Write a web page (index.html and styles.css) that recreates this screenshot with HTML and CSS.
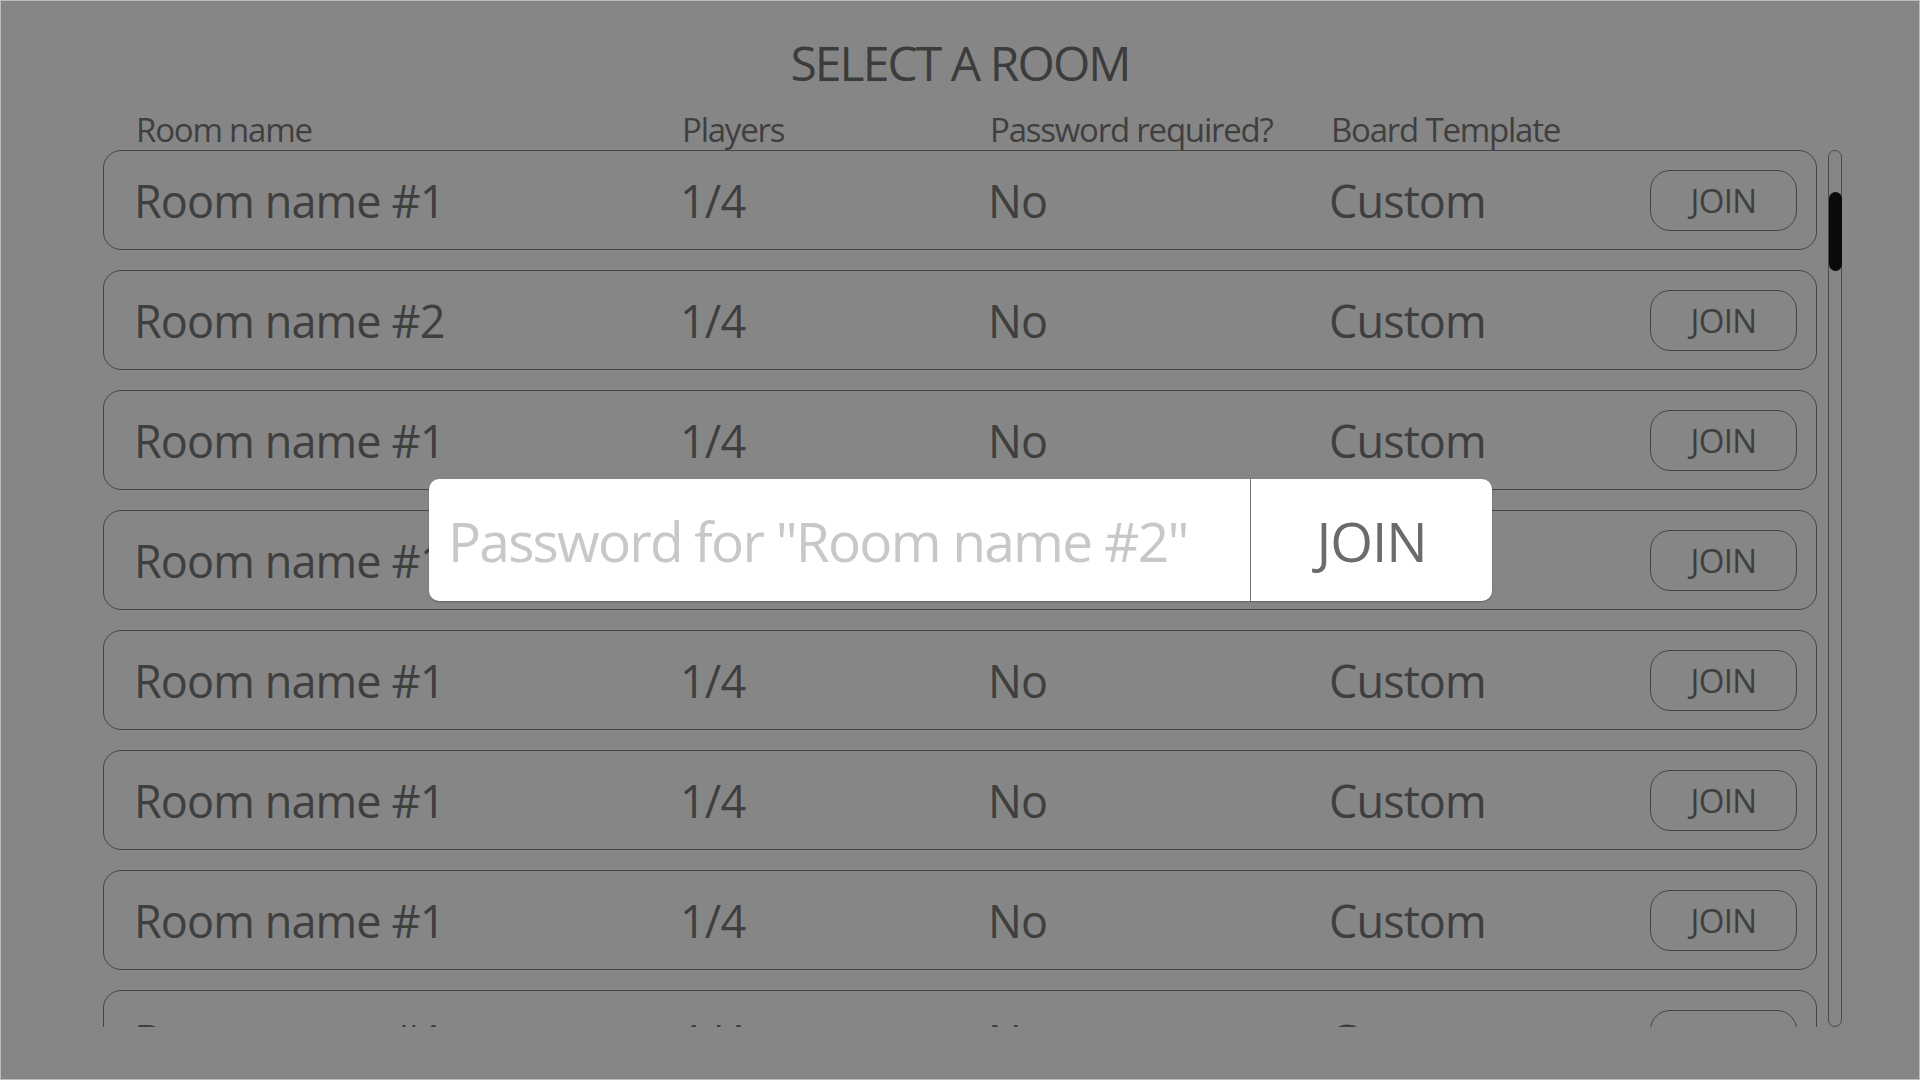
FILE: index.html
```html
<!DOCTYPE html>
<html lang="en">
<head>
<meta charset="utf-8">
<title>Select a room</title>
<link rel="stylesheet" href="styles.css">
</head>
<body>
<main class="screen">
  <h1 class="title">SELECT A ROOM</h1>
  <section class="lobby">
    <div class="cols headers">
      <span>Room name</span>
      <span>Players</span>
      <span>Password required?</span>
      <span>Board Template</span>
    </div>
    <div class="list-wrap">
      <div class="list">
        <div class="cols room"><span>Room name #1</span><span>1/4</span><span>No</span><span>Custom</span><button class="join">JOIN</button></div>
        <div class="cols room"><span>Room name #2</span><span>1/4</span><span>No</span><span>Custom</span><button class="join">JOIN</button></div>
        <div class="cols room"><span>Room name #1</span><span>1/4</span><span>No</span><span>Custom</span><button class="join">JOIN</button></div>
        <div class="cols room"><span>Room name #1</span><span>1/4</span><span>No</span><span>Custom</span><button class="join">JOIN</button></div>
        <div class="cols room"><span>Room name #1</span><span>1/4</span><span>No</span><span>Custom</span><button class="join">JOIN</button></div>
        <div class="cols room"><span>Room name #1</span><span>1/4</span><span>No</span><span>Custom</span><button class="join">JOIN</button></div>
        <div class="cols room"><span>Room name #1</span><span>1/4</span><span>No</span><span>Custom</span><button class="join">JOIN</button></div>
        <div class="cols room"><span>Room name #1</span><span>1/4</span><span>No</span><span>Custom</span><button class="join">JOIN</button></div>
      </div>
      <div class="scrollbar"><div class="thumb"></div></div>
    </div>
  </section>
  <div class="modal">
    <input class="pw" type="password" placeholder="Password for &quot;Room name #2&quot;">
    <button class="modal-join">JOIN</button>
  </div>
</main>
</body>
</html>
```
FILE: styles.css
```css
* { box-sizing: border-box; }
html, body { margin: 0; padding: 0; }
body {
  width: 1920px;
  height: 1080px;
  background: #868686;
  border: 1px solid #bdbdbd;
  overflow: hidden;
  font-family: "Open Sans", "Noto Sans", sans-serif;
  color: #3f3f3f;
}
.screen {
  position: relative;
  height: 100%;
  padding-top: 30px;
}
.title {
  margin: 0;
  font-size: 48px;
  font-weight: 400;
  line-height: 64px;
  letter-spacing: -0.04em;
  text-align: center;
  color: #3c3c3c;
}
.lobby {
  margin: 14px 0 0 102px;
  width: 1740px;
}
.cols {
  display: grid;
  grid-template-columns: 546px 308px 341px 1fr auto;
  align-items: center;
  padding-left: 30px;
  border: 1px solid transparent;
}
.headers {
  font-size: 33px;
  line-height: 39px;
  letter-spacing: -0.037em;
  width: 1714px;
  padding-left: 32px;
}
.headers span:first-child { margin-right: -2px; }
.list-wrap {
  display: flex;
  gap: 11px;
}
.list {
  width: 1714px;
  height: 877px;
  overflow: hidden;
  display: flex;
  flex-direction: column;
  gap: 20px;
}
.room {
  flex: none;
  height: 100px;
  border: 1px solid #454545;
  border-radius: 18px;
  font-size: 45px;
  letter-spacing: -0.02em;
  padding-right: 19px;
  padding-top: 1px;
}
.join {
  width: 147px;
  height: 61px;
  margin-top: -1px;
  border: 1px solid #454545;
  border-radius: 20px;
  background: transparent;
  font-family: inherit;
  font-size: 33px;
  letter-spacing: -0.02em;
  color: #3f3f3f;
  padding: 0;
  line-height: 1;
}
.scrollbar {
  width: 14px;
  height: 877px;
  border: 1px solid #4a4a4a;
  border-radius: 7px;
  padding-top: 41px;
}
.thumb {
  width: 13px;
  height: 79px;
  background: #0b0b0b;
  border-radius: 7px;
}
.modal {
  position: absolute;
  left: 428px;
  top: 478px;
  width: 1063px;
  height: 122px;
  display: flex;
  background: #fff;
  border-radius: 10px;
  box-shadow: 0 1px 2px rgba(0,0,0,0.25);
  overflow: hidden;
}
.pw {
  flex: none;
  width: 822px;
  height: 100%;
  border: 0;
  border-right: 1px solid #777;
  outline: none;
  padding: 0 0 0 19px;
  font-family: inherit;
  font-size: 55px;
  letter-spacing: -0.032em;
  background: transparent;
  color: #333;
}
.pw::placeholder { color: #c8c8c8; }
.modal-join {
  flex: 1;
  border: 0;
  background: transparent;
  font-family: inherit;
  font-size: 55px;
  letter-spacing: -0.02em;
  color: #6b6b6b;
  padding: 0;
}
```
